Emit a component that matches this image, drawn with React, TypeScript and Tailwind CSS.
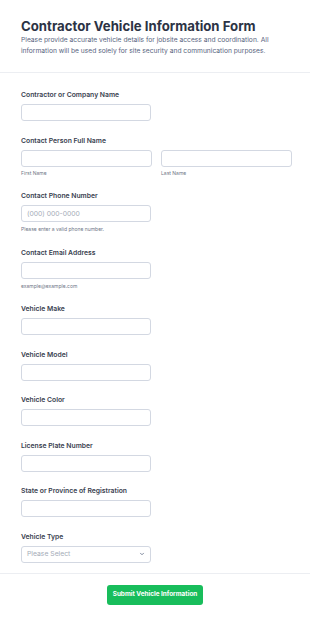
import { ChevronDown } from 'lucide-react';

const font = { fontFamily: 'Inter, "Noto Sans", sans-serif' };

function Label({ children }: { children: React.ReactNode }) {
  return (
    <label className="mb-[4px] block text-[6.8px] font-semibold leading-[10px] text-[#39414f]">
      {children}
    </label>
  );
}

function TextInput({ placeholder }: { placeholder?: string }) {
  return (
    <input
      placeholder={placeholder}
      className="block h-[17px] w-full rounded-[3px] border border-[#d3d8e2] bg-white px-[5px] text-[6.8px] text-[#2c3345] outline-none placeholder:text-[#a5acb8]"
    />
  );
}

function Sub({ children, className = '' }: { children: React.ReactNode; className?: string }) {
  return <p className={`text-[5px] leading-[8px] text-[#6f7787] ${className}`}>{children}</p>;
}

function Field({ label }: { label: string }) {
  return (
    <div className="w-[130px]">
      <Label>{label}</Label>
      <TextInput />
    </div>
  );
}

export default function App() {
  return (
    <div className="min-h-[621px] bg-white" style={font}>
      <header className="border-b border-[#eceef2] px-[21px] pb-[16px] pt-[17px]">
        <h1 className="text-[13.2px] font-bold leading-[18px] text-[#2c3345]">
          Contractor Vehicle Information Form
        </h1>
        <p className="text-[6.7px] leading-[10.7px] text-[#57647e]">
          Please provide accurate vehicle details for jobsite access and coordination. All information
          will be used solely for site security and communication purposes.
        </p>
      </header>

      <form className="flex flex-col gap-[14.5px] px-[21px] pb-[10px] pt-[17px]">
        <Field label="Contractor or Company Name" />

        <div>
          <Label>Contact Person Full Name</Label>
          <div className="grid w-[271px] grid-cols-2 gap-[9px]">
            <div>
              <TextInput />
              <Sub className="mt-[2px]">First Name</Sub>
            </div>
            <div>
              <TextInput />
              <Sub className="mt-[2px]">Last Name</Sub>
            </div>
          </div>
        </div>

        <div className="w-[130px]">
          <Label>Contact Phone Number</Label>
          <TextInput placeholder="(000) 000-0000" />
          <Sub className="mt-[3px]">Please enter a valid phone number.</Sub>
        </div>

        <div className="w-[130px]">
          <Label>Contact Email Address</Label>
          <TextInput />
          <Sub className="mt-[3px]">example@example.com</Sub>
        </div>

        <Field label="Vehicle Make" />
        <Field label="Vehicle Model" />
        <Field label="Vehicle Color" />
        <Field label="License Plate Number" />
        <Field label="State or Province of Registration" />

        <div className="w-[130px]">
          <Label>Vehicle Type</Label>
          <div className="flex h-[17px] w-full items-center justify-between rounded-[3px] border border-[#d3d8e2] bg-white pl-[5px] pr-[5px]">
            <span className="text-[6.8px] text-[#a5acb8]">Please Select</span>
            <ChevronDown className="h-[6px] w-[6px] text-[#57647e]" strokeWidth={3} />
          </div>
        </div>
      </form>

      <div className="flex justify-center border-t border-[#eceef2] pb-[17px] pt-[11px]">
        <button
          type="button"
          className="h-[20px] w-[96px] rounded-[3px] bg-[#18bd5b] text-[6.4px] font-bold text-white"
        >
          Submit Vehicle Information
        </button>
      </div>
    </div>
  );
}
